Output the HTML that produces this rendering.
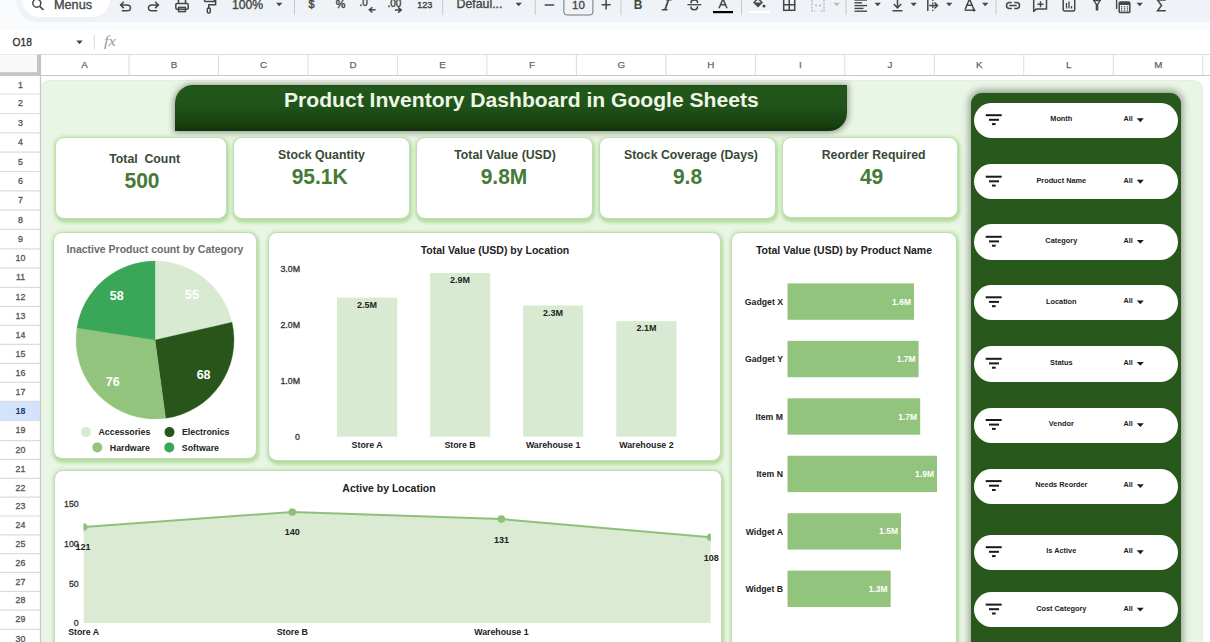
<!DOCTYPE html><html><head><meta charset="utf-8"><style>
*{margin:0;padding:0;box-sizing:border-box}
html,body{width:1210px;height:642px;overflow:hidden;background:#fff;font-family:"Liberation Sans", sans-serif;position:relative}
.abs{position:absolute}
.card{position:absolute;background:#fff;border:1.2px solid #c6d8bf;border-radius:9px;box-shadow:1px 2.5px 3.5px 1px rgba(150,208,120,.6),0 0 3px 1.5px rgba(208,238,192,.75)}
.pill{position:absolute;left:973.5px;width:204.5px;height:35.3px;background:#fff;border-radius:18px}
svg{position:absolute;left:0;top:0}
</style></head><body>

<div class="abs" style="left:0;top:0;width:1210px;height:30px;background:#f9fbfd"></div>
<div class="abs" style="left:16px;top:-22px;width:1220px;height:44px;background:#eff2f6;border-radius:22px"></div>
<div class="abs" style="left:22px;top:-20px;width:88px;height:37px;background:#fff;border-radius:18px"></div>
<div class="abs" style="left:0;top:54px;width:1210px;height:1px;background:#dadce0"></div>
<div class="abs" style="left:41.3px;top:81.2px;width:1160.5px;height:600px;background:#eaf6e5;border-radius:8px;box-shadow:0 0 0 0.8px #dfe7dc"></div>
<div class="abs" style="left:175.3px;top:84.6px;width:671.7px;height:46px;border-radius:18px 0 18px 0;background:linear-gradient(#1c4a14 0%,#22581a 6%,#20531a 45%,#18410f 85%,#10300b 100%);box-shadow:0 0.5px 6px 1.5px rgba(0,0,0,.36)"></div>
<div class="card" style="left:55px;top:137px;width:172.20px;height:82.10px"></div>
<div class="card" style="left:233px;top:136.5px;width:177.00px;height:82.50px"></div>
<div class="card" style="left:416.1px;top:136.5px;width:177.10px;height:82.50px"></div>
<div class="card" style="left:598.7px;top:136.5px;width:177.00px;height:82.00px"></div>
<div class="card" style="left:781.8px;top:136.5px;width:176.00px;height:81.50px"></div>
<div class="card" style="left:53px;top:232.1px;width:203.8px;height:227.00000000000003px"></div>
<div class="card" style="left:267.7px;top:231.5px;width:453.7px;height:229.5px"></div>
<div class="card" style="left:731.3px;top:232.2px;width:225.60000000000002px;height:467.8px"></div>
<div class="card" style="left:53.7px;top:470.2px;width:668.5px;height:229.8px"></div>
<div class="abs" style="left:970.5px;top:93px;width:210.5px;height:600px;background:#27571a;border-radius:11px 11px 0 0;box-shadow:0 -0.5px 7px 2px rgba(0,0,0,.36)"></div>
<div class="pill" style="top:102.7px"></div>
<div class="pill" style="top:164.2px"></div>
<div class="pill" style="top:224.3px"></div>
<div class="pill" style="top:284.8px"></div>
<div class="pill" style="top:346.3px"></div>
<div class="pill" style="top:407.5px"></div>
<div class="pill" style="top:468.6px"></div>
<div class="pill" style="top:534.7px"></div>
<div class="pill" style="top:592.1px"></div>
<svg width="1210" height="642" viewBox="0 0 1210 642" style="font-family:"Liberation Sans", sans-serif"><rect x="0" y="54.5" width="40" height="21" fill="#f8f9fa"/>
<rect x="0" y="401.30" width="40" height="19.20" fill="#d3e3fd"/>
<line x1="0" y1="94.00" x2="40" y2="94.00" stroke="#dadce0" stroke-width="1.2"/>
<line x1="0" y1="113.50" x2="40" y2="113.50" stroke="#dadce0" stroke-width="1.2"/>
<line x1="0" y1="132.82" x2="40" y2="132.82" stroke="#dadce0" stroke-width="1.2"/>
<line x1="0" y1="152.15" x2="40" y2="152.15" stroke="#dadce0" stroke-width="1.2"/>
<line x1="0" y1="171.48" x2="40" y2="171.48" stroke="#dadce0" stroke-width="1.2"/>
<line x1="0" y1="190.80" x2="40" y2="190.80" stroke="#dadce0" stroke-width="1.2"/>
<line x1="0" y1="210.12" x2="40" y2="210.12" stroke="#dadce0" stroke-width="1.2"/>
<line x1="0" y1="229.45" x2="40" y2="229.45" stroke="#dadce0" stroke-width="1.2"/>
<line x1="0" y1="248.78" x2="40" y2="248.78" stroke="#dadce0" stroke-width="1.2"/>
<line x1="0" y1="268.10" x2="40" y2="268.10" stroke="#dadce0" stroke-width="1.2"/>
<line x1="0" y1="287.40" x2="40" y2="287.40" stroke="#dadce0" stroke-width="1.2"/>
<line x1="0" y1="306.38" x2="40" y2="306.38" stroke="#dadce0" stroke-width="1.2"/>
<line x1="0" y1="325.37" x2="40" y2="325.37" stroke="#dadce0" stroke-width="1.2"/>
<line x1="0" y1="344.35" x2="40" y2="344.35" stroke="#dadce0" stroke-width="1.2"/>
<line x1="0" y1="363.33" x2="40" y2="363.33" stroke="#dadce0" stroke-width="1.2"/>
<line x1="0" y1="382.32" x2="40" y2="382.32" stroke="#dadce0" stroke-width="1.2"/>
<line x1="0" y1="401.30" x2="40" y2="401.30" stroke="#dadce0" stroke-width="1.2"/>
<line x1="0" y1="420.50" x2="40" y2="420.50" stroke="#dadce0" stroke-width="1.2"/>
<line x1="0" y1="440.60" x2="40" y2="440.60" stroke="#dadce0" stroke-width="1.2"/>
<line x1="0" y1="459.40" x2="40" y2="459.40" stroke="#dadce0" stroke-width="1.2"/>
<line x1="0" y1="478.40" x2="40" y2="478.40" stroke="#dadce0" stroke-width="1.2"/>
<line x1="0" y1="497.20" x2="40" y2="497.20" stroke="#dadce0" stroke-width="1.2"/>
<line x1="0" y1="516.00" x2="40" y2="516.00" stroke="#dadce0" stroke-width="1.2"/>
<line x1="0" y1="534.80" x2="40" y2="534.80" stroke="#dadce0" stroke-width="1.2"/>
<line x1="0" y1="553.60" x2="40" y2="553.60" stroke="#dadce0" stroke-width="1.2"/>
<line x1="0" y1="572.40" x2="40" y2="572.40" stroke="#dadce0" stroke-width="1.2"/>
<line x1="0" y1="591.30" x2="40" y2="591.30" stroke="#dadce0" stroke-width="1.2"/>
<line x1="0" y1="610.20" x2="40" y2="610.20" stroke="#dadce0" stroke-width="1.2"/>
<line x1="0" y1="629.30" x2="40" y2="629.30" stroke="#dadce0" stroke-width="1.2"/>
<line x1="0" y1="648.30" x2="40" y2="648.30" stroke="#dadce0" stroke-width="1.2"/>
<text x="20.5" y="87.66" font-size="8.8" font-weight="normal" fill="#555" text-anchor="middle" stroke="#555" stroke-width="0.3">1</text>
<text x="20.5" y="106.46" font-size="8.8" font-weight="normal" fill="#555" text-anchor="middle" stroke="#555" stroke-width="0.3">2</text>
<text x="20.5" y="125.87" font-size="8.8" font-weight="normal" fill="#555" text-anchor="middle" stroke="#555" stroke-width="0.3">3</text>
<text x="20.5" y="145.2" font-size="8.8" font-weight="normal" fill="#555" text-anchor="middle" stroke="#555" stroke-width="0.3">4</text>
<text x="20.5" y="164.52" font-size="8.8" font-weight="normal" fill="#555" text-anchor="middle" stroke="#555" stroke-width="0.3">5</text>
<text x="20.5" y="183.85" font-size="8.8" font-weight="normal" fill="#555" text-anchor="middle" stroke="#555" stroke-width="0.3">6</text>
<text x="20.5" y="203.17" font-size="8.8" font-weight="normal" fill="#555" text-anchor="middle" stroke="#555" stroke-width="0.3">7</text>
<text x="20.5" y="222.5" font-size="8.8" font-weight="normal" fill="#555" text-anchor="middle" stroke="#555" stroke-width="0.3">8</text>
<text x="20.5" y="241.82" font-size="8.8" font-weight="normal" fill="#555" text-anchor="middle" stroke="#555" stroke-width="0.3">9</text>
<text x="20.5" y="261.15" font-size="8.8" font-weight="normal" fill="#555" text-anchor="middle" stroke="#555" stroke-width="0.3">10</text>
<text x="20.5" y="280.46" font-size="8.8" font-weight="normal" fill="#555" text-anchor="middle" stroke="#555" stroke-width="0.3">11</text>
<text x="20.5" y="299.6" font-size="8.8" font-weight="normal" fill="#555" text-anchor="middle" stroke="#555" stroke-width="0.3">12</text>
<text x="20.5" y="318.58" font-size="8.8" font-weight="normal" fill="#555" text-anchor="middle" stroke="#555" stroke-width="0.3">13</text>
<text x="20.5" y="337.57" font-size="8.8" font-weight="normal" fill="#555" text-anchor="middle" stroke="#555" stroke-width="0.3">14</text>
<text x="20.5" y="356.55" font-size="8.8" font-weight="normal" fill="#555" text-anchor="middle" stroke="#555" stroke-width="0.3">15</text>
<text x="20.5" y="375.53" font-size="8.8" font-weight="normal" fill="#555" text-anchor="middle" stroke="#555" stroke-width="0.3">16</text>
<text x="20.5" y="394.52" font-size="8.8" font-weight="normal" fill="#555" text-anchor="middle" stroke="#555" stroke-width="0.3">17</text>
<text x="20.5" y="413.64" font-size="8.9" font-weight="bold" fill="#1b3a66" text-anchor="middle" >18</text>
<text x="20.5" y="433.26" font-size="8.8" font-weight="normal" fill="#555" text-anchor="middle" stroke="#555" stroke-width="0.3">19</text>
<text x="20.5" y="452.71" font-size="8.8" font-weight="normal" fill="#555" text-anchor="middle" stroke="#555" stroke-width="0.3">20</text>
<text x="20.5" y="471.61" font-size="8.8" font-weight="normal" fill="#555" text-anchor="middle" stroke="#555" stroke-width="0.3">21</text>
<text x="20.5" y="490.51" font-size="8.8" font-weight="normal" fill="#555" text-anchor="middle" stroke="#555" stroke-width="0.3">22</text>
<text x="20.5" y="509.31" font-size="8.8" font-weight="normal" fill="#555" text-anchor="middle" stroke="#555" stroke-width="0.3">23</text>
<text x="20.5" y="528.11" font-size="8.8" font-weight="normal" fill="#555" text-anchor="middle" stroke="#555" stroke-width="0.3">24</text>
<text x="20.5" y="546.91" font-size="8.8" font-weight="normal" fill="#555" text-anchor="middle" stroke="#555" stroke-width="0.3">25</text>
<text x="20.5" y="565.71" font-size="8.8" font-weight="normal" fill="#555" text-anchor="middle" stroke="#555" stroke-width="0.3">26</text>
<text x="20.5" y="584.56" font-size="8.8" font-weight="normal" fill="#555" text-anchor="middle" stroke="#555" stroke-width="0.3">27</text>
<text x="20.5" y="603.46" font-size="8.8" font-weight="normal" fill="#555" text-anchor="middle" stroke="#555" stroke-width="0.3">28</text>
<text x="20.5" y="622.46" font-size="8.8" font-weight="normal" fill="#555" text-anchor="middle" stroke="#555" stroke-width="0.3">29</text>
<text x="20.5" y="641.51" font-size="8.8" font-weight="normal" fill="#555" text-anchor="middle" stroke="#555" stroke-width="0.3">30</text>
<line x1="40.5" y1="54.5" x2="40.5" y2="642" stroke="#c7c7c7" stroke-width="1.2"/>
<rect x="37" y="54.5" width="3.5" height="21" fill="#c4c4c4"/>
<rect x="0" y="72.2" width="40.5" height="3.7" fill="#c4c4c4"/>
<line x1="128.98" y1="54.5" x2="128.98" y2="75.5" stroke="#dadce0" stroke-width="1"/>
<text x="84.54" y="68.47" font-size="9.8" font-weight="normal" fill="#666" text-anchor="middle" stroke="#666" stroke-width="0.25">A</text>
<line x1="218.46" y1="54.5" x2="218.46" y2="75.5" stroke="#dadce0" stroke-width="1"/>
<text x="174.02000000000004" y="68.47" font-size="9.8" font-weight="normal" fill="#666" text-anchor="middle" stroke="#666" stroke-width="0.25">B</text>
<line x1="307.94" y1="54.5" x2="307.94" y2="75.5" stroke="#dadce0" stroke-width="1"/>
<text x="263.5" y="68.47" font-size="9.8" font-weight="normal" fill="#666" text-anchor="middle" stroke="#666" stroke-width="0.25">C</text>
<line x1="397.42" y1="54.5" x2="397.42" y2="75.5" stroke="#dadce0" stroke-width="1"/>
<text x="352.98" y="68.47" font-size="9.8" font-weight="normal" fill="#666" text-anchor="middle" stroke="#666" stroke-width="0.25">D</text>
<line x1="486.90" y1="54.5" x2="486.90" y2="75.5" stroke="#dadce0" stroke-width="1"/>
<text x="442.46000000000004" y="68.47" font-size="9.8" font-weight="normal" fill="#666" text-anchor="middle" stroke="#666" stroke-width="0.25">E</text>
<line x1="576.38" y1="54.5" x2="576.38" y2="75.5" stroke="#dadce0" stroke-width="1"/>
<text x="531.9399999999999" y="68.47" font-size="9.8" font-weight="normal" fill="#666" text-anchor="middle" stroke="#666" stroke-width="0.25">F</text>
<line x1="665.86" y1="54.5" x2="665.86" y2="75.5" stroke="#dadce0" stroke-width="1"/>
<text x="621.42" y="68.47" font-size="9.8" font-weight="normal" fill="#666" text-anchor="middle" stroke="#666" stroke-width="0.25">G</text>
<line x1="755.34" y1="54.5" x2="755.34" y2="75.5" stroke="#dadce0" stroke-width="1"/>
<text x="710.9" y="68.47" font-size="9.8" font-weight="normal" fill="#666" text-anchor="middle" stroke="#666" stroke-width="0.25">H</text>
<line x1="844.82" y1="54.5" x2="844.82" y2="75.5" stroke="#dadce0" stroke-width="1"/>
<text x="800.38" y="68.47" font-size="9.8" font-weight="normal" fill="#666" text-anchor="middle" stroke="#666" stroke-width="0.25">I</text>
<line x1="934.30" y1="54.5" x2="934.30" y2="75.5" stroke="#dadce0" stroke-width="1"/>
<text x="889.86" y="68.47" font-size="9.8" font-weight="normal" fill="#666" text-anchor="middle" stroke="#666" stroke-width="0.25">J</text>
<line x1="1023.78" y1="54.5" x2="1023.78" y2="75.5" stroke="#dadce0" stroke-width="1"/>
<text x="979.34" y="68.47" font-size="9.8" font-weight="normal" fill="#666" text-anchor="middle" stroke="#666" stroke-width="0.25">K</text>
<line x1="1113.26" y1="54.5" x2="1113.26" y2="75.5" stroke="#dadce0" stroke-width="1"/>
<text x="1068.82" y="68.47" font-size="9.8" font-weight="normal" fill="#666" text-anchor="middle" stroke="#666" stroke-width="0.25">L</text>
<line x1="1202.74" y1="54.5" x2="1202.74" y2="75.5" stroke="#dadce0" stroke-width="1"/>
<text x="1158.3" y="68.47" font-size="9.8" font-weight="normal" fill="#666" text-anchor="middle" stroke="#666" stroke-width="0.25">M</text>
<line x1="40" y1="75.5" x2="1210" y2="75.5" stroke="#c7c7c7" stroke-width="1"/>
<text x="12.5" y="45.6" font-size="11.5" font-weight="normal" fill="#333" text-anchor="start" textLength="19.4" lengthAdjust="spacingAndGlyphs" stroke="#333" stroke-width="0.35">O18</text>
<path d="M76.3 40.5 L82.7 40.5 L79.5 44.2 Z" fill="#444"/>
<line x1="94.3" y1="35" x2="94.3" y2="50" stroke="#e0e0e0" stroke-width="1.2"/>
<text x="104" y="46.3" font-size="14" font-weight="normal" fill="#999" text-anchor="start" font-style="italic" font-family="Liberation Serif" textLength="12" lengthAdjust="spacingAndGlyphs">fx</text>
<circle cx="36.8" cy="3.2" r="4" fill="none" stroke="#444746" stroke-width="1.5" stroke-linecap="square"/>
<line x1="39.8" y1="6.3" x2="43.5" y2="10" stroke="#444746" stroke-width="1.7"/>
<text x="54" y="8.8" font-size="12.7" fill="#444746" stroke="#444746" stroke-width="0.35">Menus</text>
<path d="M123.3 2.2 L120.6 4.9 L123.3 7.6 M120.8 4.9 H127 Q130.5 4.9 130.5 7.9 Q130.5 10.7 127 10.7 H122.5" fill="none" stroke="#444746" stroke-width="1.5" stroke-linecap="square" stroke-linecap="butt"/>
<path d="M155.7 2.2 L158.4 4.9 L155.7 7.6 M158.2 4.9 H152 Q148.5 4.9 148.5 7.9 Q148.5 10.7 152 10.7 H156.5" fill="none" stroke="#444746" stroke-width="1.5" stroke-linecap="square" stroke-linecap="butt"/>
<path d="M178.5 0 V3.2 M185.5 3.2 V0" fill="none" stroke="#444746" stroke-width="1.5" stroke-linecap="square"/>
<rect x="175.8" y="3.6" width="12.4" height="5.6" rx="1.2" fill="none" stroke="#444746" stroke-width="1.5" stroke-linecap="square"/>
<rect x="178.6" y="7.4" width="6.8" height="4.2" fill="none" stroke="#444746" stroke-width="1.5" stroke-linecap="square"/>
<rect x="204.5" y="-2" width="10" height="3.6" rx="0.8" fill="none" stroke="#444746" stroke-width="1.5" stroke-linecap="square"/>
<path d="M214.5 0 H215.6 V4.8 H208.8 V8" fill="none" stroke="#444746" stroke-width="1.5" stroke-linecap="square" stroke-linecap="butt"/>
<rect x="207.3" y="8" width="3" height="5" rx="1.3" fill="none" stroke="#444746" stroke-width="1.5" stroke-linecap="square"/>
<text x="232" y="9.4" font-size="12.2" fill="#444746" stroke="#444746" stroke-width="0.35">100%</text>
<path d="M276 2.8 h6.4 l-3.2 3.4 z" fill="#444746"/>
<line x1="294.5" y1="-1" x2="294.5" y2="15" stroke="#c7c7c7" stroke-width="1"/>
<text x="311.4" y="8.3" font-size="10.8" fill="#444746" text-anchor="middle" stroke="#444746" stroke-width="0.45">$</text>
<text x="340.5" y="8.3" font-size="10.8" fill="#444746" text-anchor="middle" stroke="#444746" stroke-width="0.45">%</text>
<text x="359.5" y="6.2" font-size="10" fill="#444746" stroke="#444746" stroke-width="0.4">.0</text>
<path d="M374.8 9.8 H369.5 M371.8 7.7 L369.3 9.8 L371.8 11.9" fill="none" stroke="#444746" stroke-width="1.5" stroke-linecap="square" stroke-width="1.4" stroke-linecap="butt"/>
<text x="387.5" y="6.5" font-size="10" fill="#444746" stroke="#444746" stroke-width="0.4">.00</text>
<path d="M395.6 10 H401 M398.7 7.9 L401.2 10 L398.7 12.1" fill="none" stroke="#444746" stroke-width="1.5" stroke-linecap="square" stroke-width="1.4" stroke-linecap="butt"/>
<text x="417.2" y="8" font-size="9" fill="#444746" stroke="#444746" stroke-width="0.4">123</text>
<line x1="442.7" y1="-1" x2="442.7" y2="15" stroke="#c7c7c7" stroke-width="1"/>
<text x="456.5" y="8.2" font-size="12.35" fill="#444746" stroke="#444746" stroke-width="0.35">Defaul...</text>
<path d="M515.5 2.8 h6.4 l-3.2 3.4 z" fill="#444746"/>
<line x1="535.3" y1="-1" x2="535.3" y2="15" stroke="#c7c7c7" stroke-width="1"/>
<line x1="544.7" y1="5" x2="554.2" y2="5" stroke="#444746" stroke-width="1.5"/>
<rect x="563.9" y="-6" width="29" height="21" rx="3" fill="none" stroke="#747775" stroke-width="1"/>
<text x="578.5" y="8.5" font-size="11.5" fill="#444746" text-anchor="middle" stroke="#444746" stroke-width="0.35">10</text>
<path d="M601.6 4.8 H610.6 M606.1 0 V9.6" stroke="#444746" stroke-width="1.5"/>
<line x1="621" y1="-1" x2="621" y2="15" stroke="#c7c7c7" stroke-width="1"/>
<text x="638" y="9" font-size="12" font-weight="bold" fill="#444746" text-anchor="middle">B</text>
<path d="M665 9.8 L668.6 -0.5" stroke="#444746" stroke-width="1.8"/>
<path d="M661.8 9.8 H667.5 M666 -0.3 H671.8" stroke="#444746" stroke-width="1.6"/>
<line x1="687.4" y1="4.7" x2="701.3" y2="4.7" stroke="#444746" stroke-width="1.3"/>
<path d="M691 2.5 Q691 0 694.3 0 Q697.5 0 697.5 2.2 M697.5 7 Q697.5 9.8 694.3 9.8 Q691 9.8 691 7.3" fill="none" stroke="#444746" stroke-width="1.5" stroke-linecap="square" stroke-width="1.4" stroke-linecap="butt"/>
<path d="M719.3 7.5 L723 -1 L726.7 7.5 M720.5 4.8 H725.5" fill="none" stroke="#444746" stroke-width="1.5" stroke-linecap="square" stroke-width="1.4" stroke-linecap="butt"/>
<rect x="713" y="11" width="20" height="2.2" fill="#000"/>
<line x1="741.5" y1="-1" x2="741.5" y2="15" stroke="#c7c7c7" stroke-width="1"/>
<path d="M753 2.5 L758 -2.5 L763 2.5 L758 7.5 Z" fill="#444746"/>
<path d="M755 2.5 L758 -0.5 L761 2.5 Z" fill="#eff2f6"/>
<circle cx="764" cy="6" r="1.5" fill="#444746"/>
<rect x="749" y="11" width="20.5" height="2.2" fill="#fff"/>
<rect x="783.7" y="-1" width="11" height="11.3" fill="none" stroke="#444746" stroke-width="1.5" stroke-linecap="square" stroke-linecap="butt"/>
<path d="M789.2 -1 V10.3 M783.7 4.7 H794.7" fill="none" stroke="#444746" stroke-width="1.5" stroke-linecap="square" stroke-linecap="butt"/>
<path d="M812 0 V11 H815 M824 0 V11 H821 M815 5.5 H817.5 M821 5.5 H818.5" fill="none" stroke="#b9bcbf" stroke-width="1.3" stroke-dasharray="2 1.2"/>
<path d="M833.5 2.8 h6.4 l-3.2 3.4 z" fill="#b9bcbf"/>
<line x1="846" y1="-1" x2="846" y2="15" stroke="#c7c7c7" stroke-width="1"/>
<rect x="854.5" y="-0.7" width="12.5" height="1.4" fill="#444746"/>
<rect x="854.5" y="2.1" width="7.5" height="1.4" fill="#444746"/>
<rect x="854.5" y="4.9" width="12.5" height="1.4" fill="#444746"/>
<rect x="854.5" y="7.7" width="9" height="1.4" fill="#444746"/>
<rect x="854.5" y="10.5" width="12.5" height="1.4" fill="#444746"/>
<path d="M874.5 2.8 h6.4 l-3.2 3.4 z" fill="#444746"/>
<path d="M897.5 -1 V7.5 M894.3 4.5 L897.5 7.8 L900.7 4.5" fill="none" stroke="#444746" stroke-width="1.5" stroke-linecap="square" stroke-linecap="butt"/>
<rect x="892.5" y="10" width="10" height="1.5" fill="#444746"/>
<path d="M910.5 2.8 h6.4 l-3.2 3.4 z" fill="#444746"/>
<line x1="927.8" y1="-1" x2="927.8" y2="11" stroke="#444746" stroke-width="1.5"/>
<line x1="932.8" y1="-1" x2="932.8" y2="11" stroke="#444746" stroke-width="1.3" stroke-dasharray="2 1.5"/>
<path d="M930 5.5 H937 M935 3 L937.5 5.5 L935 8" fill="none" stroke="#444746" stroke-width="1.5" stroke-linecap="square" stroke-linecap="butt"/>
<path d="M946 2.8 h6.4 l-3.2 3.4 z" fill="#444746"/>
<path d="M965.5 8.5 L969.5 -1 L973.5 8.5 M966.8 5.2 H972.2" fill="none" stroke="#444746" stroke-width="1.5" stroke-linecap="square" stroke-linecap="butt"/>
<path d="M964.5 10.2 H974" stroke="#444746" stroke-width="1.4"/>
<circle cx="974" cy="10.2" r="1.4" fill="#444746"/>
<path d="M982 2.8 h6.4 l-3.2 3.4 z" fill="#444746"/>
<line x1="996" y1="-1" x2="996" y2="15" stroke="#c7c7c7" stroke-width="1"/>
<path d="M1011 2.5 H1009.5 A3 3 0 0 0 1009.5 8.5 H1011 M1015 2.5 H1016.5 A3 3 0 0 1 1016.5 8.5 H1015 M1010 5.5 H1016" fill="none" stroke="#444746" stroke-width="1.5" stroke-linecap="square" stroke-width="1.6" stroke-linecap="butt"/>
<path d="M1033.7 11.5 V-1 H1046.5 V9 H1036.2 Z" fill="none" stroke="#444746" stroke-width="1.5" stroke-linecap="square" stroke-width="1.4" stroke-linejoin="round"/>
<path d="M1037.5 4.3 H1043.5 M1040.5 1.3 V7.3" stroke="#444746" stroke-width="1.4"/>
<rect x="1063.2" y="-1" width="11.5" height="12" rx="1.5" fill="none" stroke="#444746" stroke-width="1.5" stroke-linecap="square"/>
<path d="M1066.5 3 V8.5 M1069 1.5 V8.5 M1071.5 6 V8.5" stroke="#444746" stroke-width="1.3"/>
<path d="M1092.3 -0.5 H1101.7 L1098.3 4.5 V10.5 H1095.7 V4.5 Z" fill="#444746"/>
<path d="M1095 1.2 H1099 L1097 4 Z" fill="#eff2f6"/>
<line x1="1116.6" y1="-1" x2="1116.6" y2="9" stroke="#444746" stroke-width="1.4"/>
<rect x="1119.2" y="2" width="10.6" height="10.6" rx="1.2" fill="none" stroke="#444746" stroke-width="1.5" stroke-linecap="square"/>
<rect x="1119.2" y="2" width="10.6" height="3" fill="#444746"/>
<rect x="1121.0" y="6.2" width="1.3" height="1.2" fill="#444746"/>
<rect x="1121.0" y="8.2" width="1.3" height="1.2" fill="#444746"/>
<rect x="1121.0" y="10.2" width="1.3" height="1.2" fill="#444746"/>
<rect x="1123.9" y="6.2" width="1.3" height="1.2" fill="#444746"/>
<rect x="1123.9" y="8.2" width="1.3" height="1.2" fill="#444746"/>
<rect x="1123.9" y="10.2" width="1.3" height="1.2" fill="#444746"/>
<rect x="1126.8" y="6.2" width="1.3" height="1.2" fill="#444746"/>
<rect x="1126.8" y="8.2" width="1.3" height="1.2" fill="#444746"/>
<rect x="1126.8" y="10.2" width="1.3" height="1.2" fill="#444746"/>
<path d="M1136.5 2.8 h6.4 l-3.2 3.4 z" fill="#444746"/>
<path d="M1165 0 H1157.5 L1161.5 5.5 L1157.5 10.8 H1165" fill="none" stroke="#444746" stroke-width="1.5" stroke-linecap="square" stroke-width="2" stroke-linecap="butt" stroke-linejoin="miter"/>
<text x="284" y="107.3" font-size="21.1" font-weight="bold" fill="#eef6e6" text-anchor="start" >Product Inventory Dashboard in Google Sheets</text>
<text x="144.6" y="163.18" font-size="12.3" font-weight="bold" fill="#374935" text-anchor="middle" xml:space="preserve">Total  Count</text>
<text x="142" y="187.5" font-size="22.5" font-weight="bold" fill="#447b36" text-anchor="middle" textLength="35.03" lengthAdjust="spacingAndGlyphs">500</text>
<text x="321.5" y="159.48" font-size="12.3" font-weight="bold" fill="#374935" text-anchor="middle" xml:space="preserve">Stock Quantity</text>
<text x="319.7" y="183.5" font-size="22.5" font-weight="bold" fill="#447b36" text-anchor="middle" textLength="56.03" lengthAdjust="spacingAndGlyphs">95.1K</text>
<text x="505" y="159.48" font-size="12.3" font-weight="bold" fill="#374935" text-anchor="middle" xml:space="preserve">Total Value (USD)</text>
<text x="504" y="183.5" font-size="22.5" font-weight="bold" fill="#447b36" text-anchor="middle" textLength="46.68" lengthAdjust="spacingAndGlyphs">9.8M</text>
<text x="691" y="159.48" font-size="12.3" font-weight="bold" fill="#374935" text-anchor="middle" xml:space="preserve">Stock Coverage (Days)</text>
<text x="687.5" y="183.5" font-size="22.5" font-weight="bold" fill="#447b36" text-anchor="middle" textLength="29.19" lengthAdjust="spacingAndGlyphs">9.8</text>
<text x="873.6" y="159.48" font-size="12.3" font-weight="bold" fill="#374935" text-anchor="middle" xml:space="preserve">Reorder Required</text>
<text x="871.6" y="183.5" font-size="22.5" font-weight="bold" fill="#447b36" text-anchor="middle" textLength="23.36" lengthAdjust="spacingAndGlyphs">49</text>
<text x="155" y="252.83" font-size="10.5" font-weight="bold" fill="#6b6b6b" text-anchor="middle" >Inactive Product count by Category</text>
<text x="495" y="254.13" font-size="10.5" font-weight="bold" fill="#222" text-anchor="middle" >Total Value (USD) by Location</text>
<text x="844" y="254.33" font-size="10.5" font-weight="bold" fill="#222" text-anchor="middle" >Total Value (USD) by Product Name</text>
<text x="389" y="492.13" font-size="10.5" font-weight="bold" fill="#222" text-anchor="middle" >Active by Location</text>
<path d="M155,340 L155.00,261.00 A79,79 0 0 1 231.99,322.29 Z" fill="#d9ead3" stroke="#d9ead3" stroke-width="0.3"/>
<path d="M155,340 L231.99,322.29 A79,79 0 0 1 165.59,418.29 Z" fill="#29551a" stroke="#29551a" stroke-width="0.3"/>
<path d="M155,340 L165.59,418.29 A79,79 0 0 1 76.92,327.98 Z" fill="#93c47d" stroke="#93c47d" stroke-width="0.3"/>
<path d="M155,340 L76.92,327.98 A79,79 0 0 1 155.00,261.00 Z" fill="#3aa657" stroke="#3aa657" stroke-width="0.3"/>
<text x="192" y="299.36" font-size="12.5" font-weight="bold" fill="#fff" text-anchor="middle" >55</text>
<text x="116.7" y="299.96" font-size="12.5" font-weight="bold" fill="#fff" text-anchor="middle" >58</text>
<text x="203.6" y="379.16" font-size="12.5" font-weight="bold" fill="#fff" text-anchor="middle" >68</text>
<text x="112.8" y="386.26" font-size="12.5" font-weight="bold" fill="#fff" text-anchor="middle" >76</text>
<circle cx="86" cy="432.1" r="5" fill="#d9ead3"/>
<text x="98.5" y="435.21" font-size="8.8" font-weight="bold" fill="#222" text-anchor="start" >Accessories</text>
<circle cx="169.5" cy="432.1" r="5" fill="#29551a"/>
<text x="182.0" y="435.21" font-size="8.8" font-weight="bold" fill="#222" text-anchor="start" >Electronics</text>
<circle cx="97.3" cy="447.40000000000003" r="5" fill="#93c47d"/>
<text x="109.8" y="450.51" font-size="8.8" font-weight="bold" fill="#222" text-anchor="start" >Hardware</text>
<circle cx="169.3" cy="447.40000000000003" r="5" fill="#3aa657"/>
<text x="181.8" y="450.51" font-size="8.8" font-weight="bold" fill="#222" text-anchor="start" >Software</text>
<text x="300" y="439.91" font-size="8.8" font-weight="normal" fill="#333" text-anchor="end" stroke="#333" stroke-width="0.3">0</text>
<text x="300" y="383.84" font-size="8.8" font-weight="normal" fill="#333" text-anchor="end" stroke="#333" stroke-width="0.3">1.0M</text>
<text x="300" y="327.77" font-size="8.8" font-weight="normal" fill="#333" text-anchor="end" stroke="#333" stroke-width="0.3">2.0M</text>
<text x="300" y="271.7" font-size="8.8" font-weight="normal" fill="#333" text-anchor="end" stroke="#333" stroke-width="0.3">3.0M</text>
<rect x="337" y="297.65" width="60.2" height="139.05" fill="#d9ead3"/>
<text x="367.1" y="307.93" font-size="9" font-weight="bold" fill="#222" text-anchor="middle" >2.5M</text>
<text x="367.1" y="448.11" font-size="8.8" font-weight="bold" fill="#222" text-anchor="middle" >Store A</text>
<rect x="430" y="272.98" width="60.2" height="163.72" fill="#d9ead3"/>
<text x="460.1" y="283.26" font-size="9" font-weight="bold" fill="#222" text-anchor="middle" >2.9M</text>
<text x="460.1" y="448.11" font-size="8.8" font-weight="bold" fill="#222" text-anchor="middle" >Store B</text>
<rect x="523" y="305.50" width="60.2" height="131.20" fill="#d9ead3"/>
<text x="553.1" y="315.78" font-size="9" font-weight="bold" fill="#222" text-anchor="middle" >2.3M</text>
<text x="553.1" y="448.11" font-size="8.8" font-weight="bold" fill="#222" text-anchor="middle" >Warehouse 1</text>
<rect x="616.3" y="321.20" width="60.2" height="115.50" fill="#d9ead3"/>
<text x="646.4" y="331.48" font-size="9" font-weight="bold" fill="#222" text-anchor="middle" >2.1M</text>
<text x="646.4" y="448.11" font-size="8.8" font-weight="bold" fill="#222" text-anchor="middle" >Warehouse 2</text>
<rect x="787.5" y="283.40" width="126.50" height="36.4" fill="#93c47d"/>
<text x="783" y="304.77" font-size="8.7" font-weight="bold" fill="#222" text-anchor="end" >Gadget X</text>
<text x="911" y="304.7" font-size="8.5" font-weight="bold" fill="#fff" text-anchor="end" >1.6M</text>
<rect x="787.5" y="340.84" width="131.10" height="36.4" fill="#93c47d"/>
<text x="783" y="362.21" font-size="8.7" font-weight="bold" fill="#222" text-anchor="end" >Gadget Y</text>
<text x="915.6" y="362.14" font-size="8.5" font-weight="bold" fill="#fff" text-anchor="end" >1.7M</text>
<rect x="787.5" y="398.28" width="132.70" height="36.4" fill="#93c47d"/>
<text x="783" y="419.65" font-size="8.7" font-weight="bold" fill="#222" text-anchor="end" >Item M</text>
<text x="917.2" y="419.58" font-size="8.5" font-weight="bold" fill="#fff" text-anchor="end" >1.7M</text>
<rect x="787.5" y="455.72" width="149.50" height="36.4" fill="#93c47d"/>
<text x="783" y="477.09" font-size="8.7" font-weight="bold" fill="#222" text-anchor="end" >Item N</text>
<text x="934" y="477.02" font-size="8.5" font-weight="bold" fill="#fff" text-anchor="end" >1.9M</text>
<rect x="787.5" y="513.16" width="113.50" height="36.4" fill="#93c47d"/>
<text x="783" y="534.53" font-size="8.7" font-weight="bold" fill="#222" text-anchor="end" >Widget A</text>
<text x="898" y="534.46" font-size="8.5" font-weight="bold" fill="#fff" text-anchor="end" >1.5M</text>
<rect x="787.5" y="570.60" width="103.20" height="36.4" fill="#93c47d"/>
<text x="783" y="591.97" font-size="8.7" font-weight="bold" fill="#222" text-anchor="end" >Widget B</text>
<text x="887.7" y="591.9" font-size="8.5" font-weight="bold" fill="#fff" text-anchor="end" >1.3M</text>
<text x="78.7" y="626.21" font-size="8.8" font-weight="normal" fill="#333" text-anchor="end" stroke="#333" stroke-width="0.3">0</text>
<text x="78.7" y="586.54" font-size="8.8" font-weight="normal" fill="#333" text-anchor="end" stroke="#333" stroke-width="0.3">50</text>
<text x="78.7" y="546.87" font-size="8.8" font-weight="normal" fill="#333" text-anchor="end" stroke="#333" stroke-width="0.3">100</text>
<text x="78.7" y="507.21" font-size="8.8" font-weight="normal" fill="#333" text-anchor="end" stroke="#333" stroke-width="0.3">150</text>
<polygon points="83.7,623 83.7,527.01 292.3,511.93 501.4,519.07 710.6,537.32 710.6,623" fill="#dbead3"/>
<polyline points="83.7,527.01 292.3,511.93 501.4,519.07 710.6,537.32" fill="none" stroke="#8fc07a" stroke-width="2"/>
<clipPath id="lc"><rect x="83.5" y="480" width="627.3" height="150"/></clipPath>
<circle cx="83.7" cy="527.01" r="3.8" fill="#8fc07a" clip-path="url(#lc)"/>
<circle cx="292.3" cy="511.93" r="3.8" fill="#8fc07a" clip-path="url(#lc)"/>
<circle cx="501.4" cy="519.07" r="3.8" fill="#8fc07a" clip-path="url(#lc)"/>
<circle cx="710.6" cy="537.32" r="3.8" fill="#8fc07a" clip-path="url(#lc)"/>
<text x="83" y="550.48" font-size="9" font-weight="bold" fill="#222" text-anchor="middle" >121</text>
<text x="292.3" y="535.28" font-size="9" font-weight="bold" fill="#222" text-anchor="middle" >140</text>
<text x="501.4" y="542.68" font-size="9" font-weight="bold" fill="#222" text-anchor="middle" >131</text>
<text x="711.2" y="560.58" font-size="9" font-weight="bold" fill="#222" text-anchor="middle" >108</text>
<text x="83.7" y="635.21" font-size="8.8" font-weight="bold" fill="#222" text-anchor="middle" >Store A</text>
<text x="292.3" y="635.21" font-size="8.8" font-weight="bold" fill="#222" text-anchor="middle" >Store B</text>
<text x="501.4" y="635.21" font-size="8.8" font-weight="bold" fill="#222" text-anchor="middle" >Warehouse 1</text>
<rect x="985.7" y="114.20" width="16" height="2" fill="#1a1a1a"/>
<rect x="989" y="118.80" width="10" height="2" fill="#1a1a1a"/>
<rect x="992" y="123.10" width="3.7" height="2" fill="#1a1a1a"/>
<text x="1061.3" y="121.43" font-size="7.9" font-weight="bold" fill="#222" text-anchor="middle" textLength="22.04" lengthAdjust="spacingAndGlyphs">Month</text>
<text x="1123.5" y="121.36" font-size="7.7" font-weight="bold" fill="#1a1a1a" text-anchor="start" textLength="9.2" lengthAdjust="spacingAndGlyphs">All</text>
<path d="M1136.8 118.35 h7 l-3.5 3.8 z" fill="#1a1a1a"/>
<rect x="985.7" y="175.70" width="16" height="2" fill="#1a1a1a"/>
<rect x="989" y="180.30" width="10" height="2" fill="#1a1a1a"/>
<rect x="992" y="184.60" width="3.7" height="2" fill="#1a1a1a"/>
<text x="1061.3" y="182.93" font-size="7.9" font-weight="bold" fill="#222" text-anchor="middle" textLength="49.83" lengthAdjust="spacingAndGlyphs">Product Name</text>
<text x="1123.5" y="182.86" font-size="7.7" font-weight="bold" fill="#1a1a1a" text-anchor="start" textLength="9.2" lengthAdjust="spacingAndGlyphs">All</text>
<path d="M1136.8 179.85 h7 l-3.5 3.8 z" fill="#1a1a1a"/>
<rect x="985.7" y="235.80" width="16" height="2" fill="#1a1a1a"/>
<rect x="989" y="240.40" width="10" height="2" fill="#1a1a1a"/>
<rect x="992" y="244.70" width="3.7" height="2" fill="#1a1a1a"/>
<text x="1061.3" y="243.03" font-size="7.9" font-weight="bold" fill="#222" text-anchor="middle" textLength="31.86" lengthAdjust="spacingAndGlyphs">Category</text>
<text x="1123.5" y="242.96" font-size="7.7" font-weight="bold" fill="#1a1a1a" text-anchor="start" textLength="9.2" lengthAdjust="spacingAndGlyphs">All</text>
<path d="M1136.8 239.95 h7 l-3.5 3.8 z" fill="#1a1a1a"/>
<rect x="985.7" y="296.30" width="16" height="2" fill="#1a1a1a"/>
<rect x="989" y="300.90" width="10" height="2" fill="#1a1a1a"/>
<rect x="992" y="305.20" width="3.7" height="2" fill="#1a1a1a"/>
<text x="1061.3" y="303.53" font-size="7.9" font-weight="bold" fill="#222" text-anchor="middle" textLength="30.62" lengthAdjust="spacingAndGlyphs">Location</text>
<text x="1123.5" y="303.46" font-size="7.7" font-weight="bold" fill="#1a1a1a" text-anchor="start" textLength="9.2" lengthAdjust="spacingAndGlyphs">All</text>
<path d="M1136.8 300.45 h7 l-3.5 3.8 z" fill="#1a1a1a"/>
<rect x="985.7" y="357.80" width="16" height="2" fill="#1a1a1a"/>
<rect x="989" y="362.40" width="10" height="2" fill="#1a1a1a"/>
<rect x="992" y="366.70" width="3.7" height="2" fill="#1a1a1a"/>
<text x="1061.3" y="365.03" font-size="7.9" font-weight="bold" fill="#222" text-anchor="middle" textLength="22.46" lengthAdjust="spacingAndGlyphs">Status</text>
<text x="1123.5" y="364.96" font-size="7.7" font-weight="bold" fill="#1a1a1a" text-anchor="start" textLength="9.2" lengthAdjust="spacingAndGlyphs">All</text>
<path d="M1136.8 361.95 h7 l-3.5 3.8 z" fill="#1a1a1a"/>
<rect x="985.7" y="419.00" width="16" height="2" fill="#1a1a1a"/>
<rect x="989" y="423.60" width="10" height="2" fill="#1a1a1a"/>
<rect x="992" y="427.90" width="3.7" height="2" fill="#1a1a1a"/>
<text x="1061.3" y="426.23" font-size="7.9" font-weight="bold" fill="#222" text-anchor="middle" textLength="24.91" lengthAdjust="spacingAndGlyphs">Vendor</text>
<text x="1123.5" y="426.16" font-size="7.7" font-weight="bold" fill="#1a1a1a" text-anchor="start" textLength="9.2" lengthAdjust="spacingAndGlyphs">All</text>
<path d="M1136.8 423.15 h7 l-3.5 3.8 z" fill="#1a1a1a"/>
<rect x="985.7" y="480.10" width="16" height="2" fill="#1a1a1a"/>
<rect x="989" y="484.70" width="10" height="2" fill="#1a1a1a"/>
<rect x="992" y="489.00" width="3.7" height="2" fill="#1a1a1a"/>
<text x="1061.3" y="487.33" font-size="7.9" font-weight="bold" fill="#222" text-anchor="middle" textLength="52.28" lengthAdjust="spacingAndGlyphs">Needs Reorder</text>
<text x="1123.5" y="487.26" font-size="7.7" font-weight="bold" fill="#1a1a1a" text-anchor="start" textLength="9.2" lengthAdjust="spacingAndGlyphs">All</text>
<path d="M1136.8 484.25 h7 l-3.5 3.8 z" fill="#1a1a1a"/>
<rect x="985.7" y="546.20" width="16" height="2" fill="#1a1a1a"/>
<rect x="989" y="550.80" width="10" height="2" fill="#1a1a1a"/>
<rect x="992" y="555.10" width="3.7" height="2" fill="#1a1a1a"/>
<text x="1061.3" y="553.43" font-size="7.9" font-weight="bold" fill="#222" text-anchor="middle" textLength="29.96" lengthAdjust="spacingAndGlyphs">Is Active</text>
<text x="1123.5" y="553.36" font-size="7.7" font-weight="bold" fill="#1a1a1a" text-anchor="start" textLength="9.2" lengthAdjust="spacingAndGlyphs">All</text>
<path d="M1136.8 550.35 h7 l-3.5 3.8 z" fill="#1a1a1a"/>
<rect x="985.7" y="603.60" width="16" height="2" fill="#1a1a1a"/>
<rect x="989" y="608.20" width="10" height="2" fill="#1a1a1a"/>
<rect x="992" y="612.50" width="3.7" height="2" fill="#1a1a1a"/>
<text x="1061.3" y="610.83" font-size="7.9" font-weight="bold" fill="#222" text-anchor="middle" textLength="50.23" lengthAdjust="spacingAndGlyphs">Cost Category</text>
<text x="1123.5" y="610.76" font-size="7.7" font-weight="bold" fill="#1a1a1a" text-anchor="start" textLength="9.2" lengthAdjust="spacingAndGlyphs">All</text>
<path d="M1136.8 607.75 h7 l-3.5 3.8 z" fill="#1a1a1a"/></svg>
</body></html>
